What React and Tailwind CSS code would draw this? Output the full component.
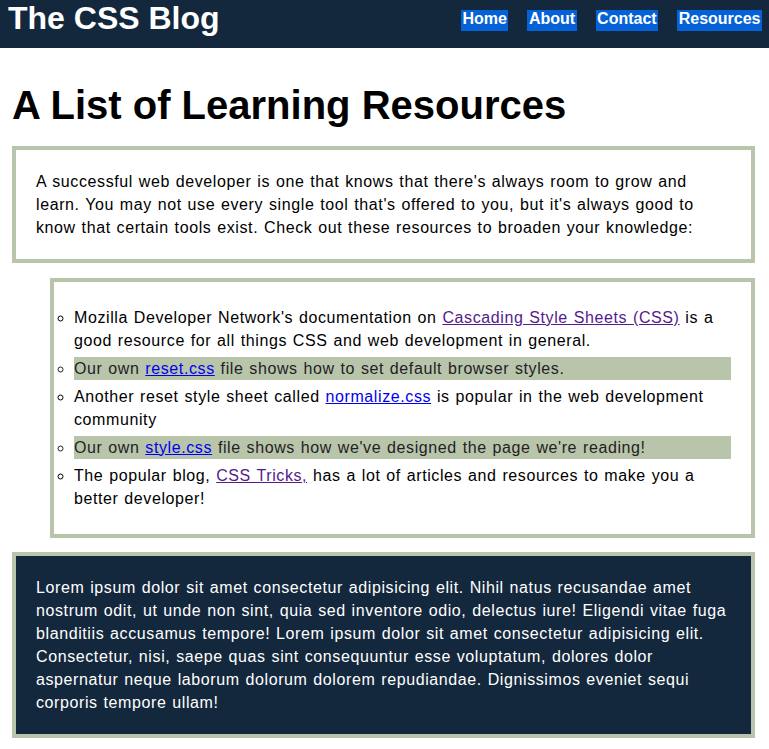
const links = ['Home', 'About', 'Contact', 'Resources'];

export default function App() {
  return (
    <div className="min-h-[749px] bg-white font-['Liberation_Sans',Arial,sans-serif] text-[16px] text-black">
      <header className="flex h-[48px] items-start justify-between bg-[#14283d] pl-[8px] pr-[7px]">
        <div className="text-[32px] font-bold leading-[36.8px] text-white">The CSS Blog</div>
        <nav className="mt-[10px] flex gap-[19px]">
          {links.map((l) => (
            <a key={l} href="#" className="block h-[21px] bg-[#0561d8] px-[1.5px] pb-[4px] text-[16px] font-bold leading-[17px] text-white">
              {l}
            </a>
          ))}
        </nav>
      </header>

      <h1 className="mx-[12px] mt-[35px] mb-[18px] text-[40px] font-bold leading-[44.7px]">A List of Learning Resources</h1>

      <div className="ml-[12px] mr-[14px] border-4 border-[#b8c5ab] p-[20px] leading-[23px] tracking-[0.6px] [word-spacing:0.8px]">
        A successful web developer is one that knows that there's always room to grow and learn. You may not use every single tool that's offered to you, but it's always good to know that certain tools exist. Check out these resources to broaden your knowledge:
      </div>

      <div className="mt-[15px] ml-[50px] mr-[14px] border-4 border-[#b8c5ab] px-[20px] py-[19px] leading-[23px] tracking-[0.6px] [word-spacing:0.8px]">
        <ul className="list-[circle] pl-0">
          <li className="my-[5px]">
            Mozilla Developer Network's documentation on <a href="#" className="text-[#551a8b] underline">Cascading Style Sheets (CSS)</a> is a good resource for all things CSS and web development in general.
          </li>
          <li className="my-[5px] bg-[#b8c5ab] text-[#222]">
            Our own <a href="#" className="text-[#0000ee] underline">reset.css</a> file shows how to set default browser styles.
          </li>
          <li className="my-[5px]">
            Another reset style sheet called <a href="#" className="text-[#0000ee] underline">normalize.css</a> is popular in the web development community
          </li>
          <li className="my-[5px] bg-[#b8c5ab] text-[#222]">
            Our own <a href="#" className="text-[#0000ee] underline">style.css</a> file shows how we've designed the page we're reading!
          </li>
          <li className="my-[5px]">
            The popular blog, <a href="#" className="text-[#551a8b] underline">CSS Tricks,</a> has a lot of articles and resources to make you a better developer!
          </li>
        </ul>
      </div>

      <div className="mt-[14px] ml-[12px] mr-[14px] border-4 border-[#b8c5ab] bg-[#14283d] p-[20px] leading-[23px] tracking-[0.6px] text-white [word-spacing:0.8px]">
        Lorem ipsum dolor sit amet consectetur adipisicing elit. Nihil natus recusandae amet nostrum odit, ut unde non sint, quia sed inventore odio, delectus iure! Eligendi vitae fuga blanditiis accusamus tempore! Lorem ipsum dolor sit amet consectetur adipisicing elit. Consectetur, nisi, saepe quas sint consequuntur esse voluptatum, dolores dolor aspernatur neque laborum dolorum dolorem repudiandae. Dignissimos eveniet sequi corporis tempore ullam!
      </div>
    </div>
  );
}
